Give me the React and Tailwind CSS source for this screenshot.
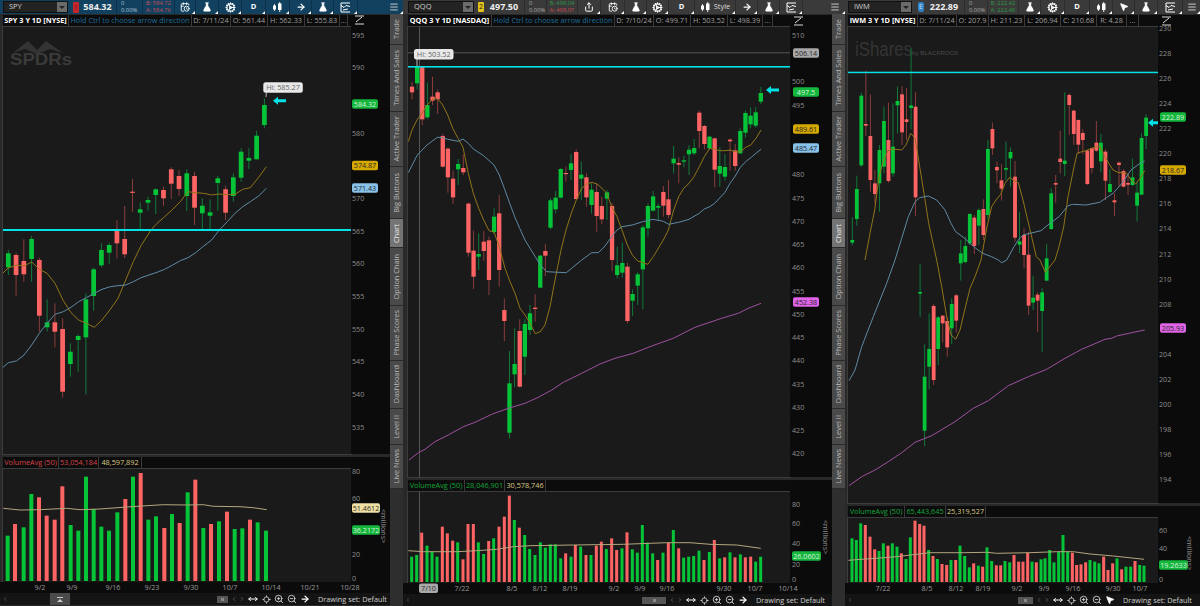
import React from "react";
import { FlaskConical, Cog, ArrowRight, MousePointer2, ZoomIn, ZoomOut, Locate, MoveHorizontal, Menu, Share, CalendarClock, ChevronLeft, ChevronRight } from "lucide-react";

const G = "#05c438", R = "#ff6464", GW = "#11793a", RW = "#8b3c3c";
const YEL = "#917519", BLU = "#5e8aa4", PUR = "#a0509f", AVG = "#b3a67c", CY = "#00e2e6";

const p1 = [
["g",250,275,253.3,267.3],["r",252.7,296,255,275],["r",239.3,281.7,261,274.3],["g",236,281.7,239,259],["r",257.7,331.7,260,315.7],["g",299.3,331.7,322.3,327.3],["r",303.3,347.3,322.3,331.7],["r",318.3,397.7,329,391.7],["g",343.3,376.7,351.7,364],["g",334.3,371.7,336,340],["g",293.3,394.3,299.3,337.3],["g",267.7,310.7,269.3,296],["g",243.3,267.3,250,265.3],["g",242.7,264,245,252.7],["r",220,258.3,230.7,243.3],["r",206,258,239,254.3],["r",179,211.7,191.7,192.7],["g",202.3,230,209.3,212.7],["g",196.7,210.7,200,202.7],["g",188.3,214,189.3,195],["r",186.7,205.7,190,198.3],["r",167.3,199,169.3,183.7],["r",170,196,176,189],["g",169.3,211,173.3,196],["r",171.7,225,176,207.7],["g",198.3,229.3,205.7,213.3],["g",199.3,229.3,212.3,215.7],["g",176,210.7,178.3,183],["r",185.7,220,189.3,212.7],["g",173.3,201.7,177.3,196],["g",148.3,181.7,151.7,177.7],["g",148.3,169,158,160.7],["g",130.7,159.3,135.7,159.3],["g",98.3,128.3,105,125]
];
const p1y = [[3,273],[8,268],[16.7,265],[24,266],[31.7,262],[39.3,269.3],[47,273.3],[55,283.3],[63.3,300.7],[71,312.7],[78.7,320],[86.3,323.3],[94.3,327.3],[102,320],[110.3,309.3],[118,298.3],[125.7,280],[133.3,261.7],[141,245.7],[151,230],[157,223.3],[164.7,216.7],[172.7,209.3],[180.3,201.7],[188,191.7],[195.7,192.7],[203.7,193.3],[211.7,195],[219.3,194],[227.3,194.7],[235,194.3],[242.7,189.3],[250.3,187.7],[258.7,177.3],[266.3,166.7]];
const p1b = [[3,367.3],[8.3,362.7],[16.3,361],[24,355],[31.7,345],[39.3,333.3],[47,323.3],[55,314.3],[63.3,311.7],[71,307.3],[78.7,301.7],[86.3,297.7],[94.3,293.3],[102,289.3],[110.3,286.7],[118,285.7],[125.7,285],[133.3,281.7],[141,277.7],[149,275],[157,272.3],[164.7,269.3],[172.7,265],[180.3,260.7],[188,257.7],[195.7,252.7],[203.7,246],[211.7,240],[219.3,230],[227.3,221.7],[235,213.3],[242.7,206.7],[250.3,201.7],[258.7,196],[266.3,188.3]];
const p1v = [[23,260,"g"],[45,225,"r"],[71,235,"g"],[94,135,"g"],[117,145,"r"],[140,200,"r"],[164,212,"r"],[187,112,"r"],[212,228,"g"],[235,245,"g"],[258,83,"g"],[281,180,"g"],[304,233,"g"],[327,245,"g"],[352,190,"g"],[376,150,"r"],[399,83,"g"],[422,72,"r"],[445,212,"g"],[468,202,"g"],[493,237,"r"],[516,195,"g"],[539,222,"r"],[563,130,"g"],[586,92,"r"],[610,237,"g"],[633,225,"r"],[657,217,"g"],[681,188,"r"],[704,240,"g"],[727,238,"g"],[750,212,"r"],[773,220,"g"],[798,245,"g"]];
const p1a = [[10,178],[60,183],[120,182],[200,178],[240,182],[300,180],[380,174],[440,170],[490,167],[560,168],[610,167],[640,172],[720,173],[760,176],[800,182]];

const o = 540;
const p2 = [
["r",65,118,80,97],["g",18,88,20,70],["r",20,195,20,178],["g",68,177,135,172],["r",50,135,110,122],["r",88,162,97,118],["r",222,322,228,320],["r",262,398,266,352],["r",332,432,356,412],["g",297,375,312,328],["r",283,345,324,337],["r",427,590,431,578],["r",512,687,572,650],["g",520,630,582,590],["r",513,602,545,573],["r",530,705,541,660],["g",445,522,470,516],["r",405,680,460,630],["r",715,843,750,783],["g",873,1135,970,1118],["g",805,982,912,943],["r",778,983,813,980],["g",778,945,792,890],["g",735,825,760,810],["r",703,785,743,747],["g",585,683,587,683],["r",552,648,573,587],["g",415,508,421,503],["g",393,460,413,448],["g",325,415,327,413],["r",320,365,339,342],["g",282,360,310,330],["r",268,420,276,417],["g",305,420,344,356],["r",340,440,352,412],["g",370,460,389,435],["r",370,515,396,468],["r",410,493,438,478],["g",390,480,397,416],["r",430,633,438,600],["g",560,655,616,645],["g",548,653,609,638],["r",608,790,620,783],["g",688,768,702,722],["g",637,735,643,677],["g",495,747,502,628],["g",430,530,438,505],["g",393,455,409,452],["g",430,482,438,443],["r",378,470,396,437],["r",360,475,418,465],["g",258,340,296,310],["r",292,370,309,314],["g",287,322,301,305],["g",255,345,269,283],["g",237,285,264,280],["r",152,265,158,213],["r",195,268,198,252],["g",228,270,230,265],["r",233,382,235,329],["g",262,380,318,341],["g",282,362,321,350],["r",235,332,239,244],["r",252,332,271,318],["g",205,282,213,280],["g",152,233,159,218],["g",142,205,167,193],["g",141,203,157,197],["g",81,132,99,125]
];
const p2y = [[10,245],[21,210],[37,178],[51,160],[66,135],[82,118],[97,115],[113,135],[128,165],[143,205],[159,235],[174,262],[190,340],[205,400],[221,445],[236,480],[252,512],[267,516],[283,560],[300,625],[315,665],[330,700],[345,745],[360,765],[375,790],[391,821],[406,815],[420,795],[435,740],[450,660],[468,570],[483,510],[499,460],[514,420],[530,385],[545,372],[561,367],[576,372],[591,385],[605,400],[620,440],[636,470],[651,510],[667,555],[682,585],[698,603],[728,613],[745,590],[775,540],[790,510],[806,450],[821,410],[836,385],[852,370],[867,350],[883,320],[898,290],[914,265],[929,268],[945,272],[960,272],[975,270],[991,275],[1006,276],[1022,262],[1037,255],[1053,235],[1068,210]];
const p2b = [[10,338],[37,285],[66,255],[97,232],[113,233],[128,238],[159,244],[174,237],[190,250],[205,267],[236,287],[267,315],[283,345],[298,385],[314,430],[329,470],[344,505],[360,540],[375,565],[391,590],[406,615],[425,635],[484,638],[500,625],[530,600],[560,578],[580,578],[600,558],[620,530],[636,510],[651,500],[682,495],[713,485],[744,478],[775,484],[791,493],[821,487],[852,478],[883,460],[898,447],[914,440],[929,430],[960,397],[975,370],[991,348],[1006,322],[1022,305],[1053,280],[1068,268]];
const p2p = [[12,660],[40,638],[60,628],[90,605],[130,585],[175,560],[210,547],[260,523],[310,505],[360,490],[400,472],[440,450],[475,427],[530,400],[585,372],[630,355],[685,340],[740,318],[805,295],[870,262],[950,235],[1000,220],[1030,205],[1068,190]].map(([x,y])=>[x,y+o]);
const p2v = [[65,320,"g"],[80,315,"g"],[95,248,"r"],[111,287,"g"],[126,305,"g"],[141,320,"g"],[157,230,"r"],[172,250,"r"],[188,272,"r"],[203,277,"g"],[219,328,"r"],[234,222,"r"],[250,222,"r"],[265,277,"g"],[281,312,"g"],[296,273,"r"],[311,265,"g"],[327,230,"r"],[343,200,"r"],[358,137,"r"],[373,210,"g"],[388,233,"r"],[404,255,"g"],[419,297,"g"],[435,315,"g"],[451,277,"g"],[466,293,"g"],[481,283,"g"],[496,283,"g"],[512,325,"g"],[527,310,"r"],[543,320,"g"],[556,285,"r"],[572,290,"g"],[588,315,"r"],[603,315,"g"],[619,287,"r"],[634,275,"r"],[649,297,"g"],[665,265,"r"],[680,300,"r"],[696,295,"g"],[711,247,"r"],[727,298,"g"],[742,308,"g"],[757,225,"g"],[772,278,"g"],[788,310,"g"],[803,330,"r"],[819,308,"g"],[835,278,"r"],[850,240,"g"],[866,295,"r"],[881,323,"g"],[896,320,"g"],[911,318,"g"],[927,302,"g"],[942,330,"r"],[958,306,"g"],[973,270,"r"],[989,325,"g"],[1004,322,"r"],[1020,307,"g"],[1035,322,"r"],[1051,313,"g"],[1066,322,"r"],[1082,320,"r"],[1097,335,"g"],[1112,320,"g"]];
const p2a = [[55,302],[100,305],[200,305],[260,302],[320,298],[370,290],[420,287],[550,285],[700,283],[830,278],[900,278],[960,283],[1040,285],[1112,295]];

const p3 = [
["g",472,555,540,548],["g",347,497,387,477],["g",98,320,107,316],["r",32,228,192,197],["r",103,395,228,360],["r",330,430,370,402],["g",255,455,270,370],["g",140,340,183,320],["r",128,368,240,363],["g",130,350,260,340],["g",80,220,123,136],["r",78,255,103,217],["r",85,240,178,186],["g",-36,208,136,144],["r",97,468,140,412],["g",612,770,696,701],["g",853,1158,950,1112],["g",760,988,867,920],["r",732,975,738,960],["g",768,915,772,867],["r",765,848,767,790],["r",770,890,783,862],["g",715,852,732,805],["r",702,818,706,782],["g",540,662,580,610],["g",530,610,558,606],["g",460,555,462,550],["r",465,582,473,558],["g",445,555,450,497],["r",418,540,447,525],["g",240,478,267,465],["r",188,285,207,265],["r",305,370,321,331],["r",313,422,361,386],["g",245,360,324,329],["g",262,380,276,295],["r",303,545,350,533],["g",455,580,544,554],["r",505,625,525,585],["r",515,765,584,737],["g",647,750,713,728],["r",697,815,704,722],["g",685,875,697,753],["g",552,662,595,662],["g",385,510,400,507],["r",345,428,369,374],["r",212,340,296,306],["g",97,348,302,312],["r",100,225,105,135],["r",150,255,152,222],["r",178,282,180,254],["r",208,283,219,240],["r",268,375,272,372],["r",262,340,264,324],["r",183,275,248,272],["g",222,337,248,304],["r",268,420,275,362],["g",327,400,372,396],["r",400,468,421,427],["r",305,380,308,315],["r",328,382,333,380],["r",340,405,369,374],["g",296,378,352,375],["g",368,485,398,437],["g",220,405,234,404],["g",163,267,173,228]
];
const p3y = [[60,600],[75,520],[89,450],[102,350],[116,300],[129,272],[143,267],[170,270],[183,255],[197,220],[210,235],[224,320],[237,400],[251,490],[264,550],[275,600],[290,680],[305,770],[318,825],[332,838],[345,810],[358,755],[375,685],[390,650],[408,600],[426,500],[440,440],[453,420],[467,403],[480,370],[494,352],[507,362],[520,368],[534,420],[548,480],[561,535],[574,590],[585,600],[601,637],[630,600],[642,560],[656,500],[669,410],[683,340],[696,280],[710,275],[723,272],[750,262],[764,258],[777,285],[791,310],[804,330],[818,337],[845,340],[858,360],[872,372],[885,355],[899,332]];
const p3b = [[12,962],[30,930],[50,860],[85,770],[125,670],[150,600],[170,535],[190,470],[210,425],[224,413],[250,408],[275,420],[300,450],[318,490],[332,515],[359,535],[386,560],[413,580],[440,590],[460,600],[470,608],[485,600],[507,560],[520,540],[534,525],[588,512],[615,490],[642,470],[669,437],[683,433],[723,435],[764,427],[804,400],[831,370],[858,330],[885,310],[899,303]];
const p3p = [[12,677],[50,650],[90,630],[130,605],[170,578],[210,547],[260,527],[330,485],[385,445],[430,422],[490,377],[550,350],[605,328],[660,295],[710,268],[780,238],[800,235],[815,228],[860,218],[899,210]].map(([x,y])=>[x,y+600]);
const p3v = [[66,175,"g"],[79,180,"g"],[92,130,"g"],[106,135,"r"],[120,170,"r"],[134,208,"r"],[147,213,"g"],[160,190,"g"],[174,197,"r"],[187,190,"g"],[201,200,"g"],[214,220,"r"],[228,237,"g"],[241,172,"g"],[255,122,"r"],[269,132,"r"],[282,137,"r"],[296,210,"g"],[309,228,"r"],[322,237,"g"],[336,252,"r"],[350,255,"r"],[363,240,"g"],[377,240,"r"],[390,197,"g"],[404,228,"g"],[418,262,"g"],[431,250,"r"],[445,257,"g"],[458,260,"r"],[471,202,"g"],[485,243,"g"],[499,256,"r"],[512,256,"r"],[525,243,"g"],[539,247,"g"],[552,225,"r"],[566,245,"r"],[579,245,"r"],[593,218,"r"],[606,245,"g"],[619,247,"r"],[633,238,"g"],[645,235,"g"],[659,210,"g"],[672,247,"g"],[686,215,"g"],[699,165,"g"],[713,215,"g"],[727,218,"r"],[740,255,"r"],[753,253,"r"],[767,247,"r"],[780,240,"g"],[794,245,"g"],[807,250,"g"],[821,230,"r"],[834,270,"r"],[848,250,"r"],[861,235,"g"],[875,268,"r"],[888,260,"g"],[902,260,"g"],[915,243,"r"],[929,255,"g"],[942,257,"g"]];
const p3a = [[55,241],[120,236],[200,230],[300,218],[400,218],[470,217],[500,220],[600,218],[680,215],[730,215],[780,222],[850,228],[942,238]];

const pts = (a, ox, oy, s = 1 / 3) => a.map(([x, y]) => `${(ox + x * s).toFixed(1)},${(oy + y * s).toFixed(1)}`).join(" ");

function Candles({ rows, x0, dx, oy, s, w }) {
  return rows.map(([c, h, l, t, b], i) => {
    const x = x0 + dx * i;
    const top = oy + t * s, bot = oy + b * s;
    return (
      <g key={i}>
        <rect x={x - 0.5} y={oy + h * s} width={1} height={(l - h) * s} fill={c === "g" ? GW : RW} />
        <rect x={x - w / 2} y={top} width={w} height={Math.max(bot - top, 1.2)} fill={c === "g" ? G : R} />
      </g>
    );
  });
}
function Bars({ rows, ox, oy, base, w }) {
  return rows.map(([x, t, c], i) => {
    const y = oy + t / 3;
    return <rect key={i} x={ox + x / 3 - w / 2} y={y} width={w} height={base - y} fill={c === "g" ? G : R} />;
  });
}
const Line = ({ p, c, w = 1 }) => <polyline points={p} fill="none" stroke={c} strokeWidth={w} strokeLinejoin="round" />;
function Arrow({ x, y }) {
  return <path d={`M${x} ${y}l5 -4v2.500h8v3h-8v2.500z`} fill={CY} />;
}
function HiLabel({ x, y, w, t, tx, ty }) {
  return (
    <g>
      <path d={`M${x + 3} ${y + 10}L${tx} ${ty}`} stroke="#bbb" strokeWidth="1" />
      <rect x={x} y={y} width={w} height={10.5} rx={2.5} fill="#e8e8e8" />
      <text x={x + w / 2} y={y + 8} textAnchor="middle" fontSize="7.300" fill="#666">{t}</text>
    </g>
  );
}
function Badge({ x, y, t, bg, fg = "#2a2a2a", w = 26 }) {
  return (
    <g>
      <rect x={x} y={y - 4.700} width={w} height={9.400} rx={2} fill={bg} />
      <text x={x + w / 2} y={y + 2.700} textAnchor="middle" fontSize="7.200" fill={fg}>{t}</text>
    </g>
  );
}
function Ticks({ x, items }) {
  return items.map(([t, y]) => (
    <text key={t} x={x} y={y + 2.600} fontSize="7.200" fill="#8d8d8d">{t}</text>
  ));
}
const range = (a, b, st) => { const r = []; for (let v = a; v >= b; v -= st) r.push(v); return r; };
function CornerIcon({ x, y }) {
  return <path d={`M${x} ${y - 4}h9M${x} ${y + 4}h9M${x + 1} ${y + 2}l6 -5`} stroke="#ddd" strokeWidth="1" fill="none" />;
}
function Millions({ x, y }) {
  return <text transform={`translate(${x} ${y}) rotate(90)`} fontSize="7.200" fill="#8d8d8d">{"<millions>"}</text>;
}
function DateBar({ className, viewBox, items, badge }) {
  return (
    <svg className={className} viewBox={viewBox}>
      {badge}
      {items.map(([t, x, c]) => (
        <text key={t} x={x} y={591} textAnchor="middle" fontSize="7.200" fill={c || "#9a9a9a"}>{t}</text>
      ))}
    </svg>
  );
}

const Corner = () => <span className="absolute right-0 bottom-0 w-0 h-0 border-l-[3px] border-l-transparent border-b-[3px] border-b-white" />;
const Flask = () => <FlaskConical size={10} color="#fff" fill="#fff" strokeWidth={1.500} />;
const Gear = () => <Cog size={11} color="#fff" strokeWidth={2.600} />;
const Drawn = () => (
  <svg width="11" height="11" viewBox="0 0 11 11" fill="none" stroke="#fff" strokeWidth="1">
    <path d="M1 1h9M1 3.500l3 2 2 -2 4 1M1 1v9h9M3 8l5 -1" />
  </svg>
);
const CandleIcon = () => (
  <svg width="11" height="10" viewBox="0 0 11 10" fill="#fff">
    <rect x="1" y="3.500" width="3" height="4" /><rect x="2.200" y="2" width="0.800" height="7" />
    <rect x="6" y="1.500" width="3.500" height="6.500" /><rect x="7.300" y="0" width="0.900" height="10" />
  </svg>
);
const Cell = ({ w, div, children }) => (
  <div className={`relative h-full flex items-center justify-center shrink-0 border-r gap-[3px] ${w} ${div}`}>
    {children}
    <Corner />
  </div>
);
function Sym({ name, w }) {
  return (
    <div className={`h-[12px] shrink-0 bg-[#232323] border border-[#111] flex items-center pl-[5px] text-[7.500px] text-[#cfcfcf] relative ${w}`}>
      {name}
      <span className="absolute right-0 top-0 bottom-0 w-[10px] bg-[#6b6b6b] flex items-center justify-center">
        <span className="w-0 h-0 border-x-[3px] border-x-transparent border-t-[3px] border-t-[#222]" />
      </span>
    </div>
  );
}
function Quote({ price, pw, cw, bw, bid, ask, bidC, askC, div, sub }) {
  return (
    <>
      <div className={`h-full flex items-center justify-center text-[9px] font-bold text-[#eee] shrink-0 border-r ${pw} ${div}`}>{price}</div>
      <div className={`h-full flex flex-col justify-center pl-[4px] text-[5.800px] leading-[7px] shrink-0 border-r ${cw} ${div} ${sub}`}>
        <span className="h-[7px] overflow-hidden">0</span><span className="h-[7px] overflow-hidden">0.00%</span>
      </div>
      <div className={`h-full flex flex-col justify-center items-center text-[5.800px] leading-[7px] shrink-0 border-r ${bw} ${div}`}>
        <span className={`h-[7px] overflow-hidden ${bidC}`}>B: {bid}</span><span className={`h-[7px] overflow-hidden ${askC}`}>A: {ask}</span>
      </div>
    </>
  );
}
const Ham = ({ cls }) => (
  <div className={`h-full flex items-center justify-center ml-auto relative ${cls}`}>
    <Menu size={10} color="#d8d8d8" strokeWidth={2.200} />
    <Corner />
  </div>
);

function HeadRow({ cells, width }) {
  return (
    <div className={`h-[11px] flex bg-[#0c0c0c] text-[7.300px] leading-[11px] whitespace-nowrap ${width}`}>
      {cells.map(([t, c, w], i) => (
        <div key={i} className={`h-full border-r border-[#3a3a3a] text-center shrink-0 ${c} ${w}`}>{t}</div>
      ))}
    </div>
  );
}

const tabs = [["Trade", "h-[31px]"], ["Times And Sales", "h-[67px]"], ["Active Trader", "h-[55px]"], ["Big Buttons", "h-[52px]"], ["Chart", "h-[29px]"], ["Option Chain", "h-[58px]"], ["Phase Scores", "h-[55px]"], ["Dashboard", "h-[48px]"], ["Level II", "h-[36px]"], ["Live News", "h-[44px]"]];
function TabStrip() {
  return (
    <div className="w-[13px] shrink-0 flex flex-col bg-[#2e2e2e]">
      {tabs.map(([t, h]) => (
        <div key={t} className={`${h} w-[13px] flex items-center justify-center border-b border-[#2a2a2a] ${t === "Chart" ? "bg-[#747474] text-[#e4e4e4]" : "bg-[#4a4a4a] text-[#b9b9b9]"}`}>
          <span className="[writing-mode:vertical-rl] rotate-180 text-[7.400px] leading-[13px] whitespace-nowrap">{t}</span>
        </div>
      ))}
    </div>
  );
}
function ScrollBar({ className, grip, thumb, arrows, last }) {
  return (
    <div className={`h-[12px] bg-[#141414] flex items-center relative text-[#9a9a9a] shrink-0 ${className}`}>
      <ChevronLeft size={6} className="absolute left-[2px]" color="#777" />
      {grip}
      <span className={`h-[7px] bg-[#555] ${thumb} flex items-center justify-center`}><span className="w-[3px] h-[3px] bg-[#888]" /></span>
      <ChevronLeft size={6} color="#888" className={arrows} />
      <ChevronRight size={6} color="#888" className="ml-[2px]" />
      <MoveHorizontal size={10} color="#fff" strokeWidth={2.400} className="ml-[3px]" />
      <Locate size={9} color="#ddd" className="ml-[4px]" />
      <ZoomIn size={10} color="#ddd" className="ml-[3px]" />
      <ZoomOut size={10} color="#ddd" className="ml-[3px]" />
      {last}
      <span className="ml-[8px] text-[7.300px] text-[#cfcfcf] whitespace-nowrap">Drawing set: Default</span>
    </div>
  );
}
const BLUE_DIV = "border-[#0c3149]", GRAY_DIV = "border-[#2d2d2d]";
const HD = "text-[#9d9d9d]";

export default function App() {
  return (
    <div className="w-[1200px] h-[606px] flex bg-[#292929] overflow-hidden font-['Open_Sans',sans-serif]">
      {/* SPY */}
      <div className="w-[403px] shrink-0 flex flex-col">
        <div className="h-[14px] bg-[#12405f] flex items-center pl-[3px] shrink-0">
          <Sym name="SPY" w="w-[65px]" />
          <span className="ml-[5px] w-[6px] h-[11px] rounded-[1px] bg-[#c4262e] text-[7px] leading-[11px] text-center text-[#7d1016] shrink-0">1</span>
          <Quote price="584.32" pw="w-[38px]" cw="w-[26px]" bw="w-[32px]" bid="584.72" ask="584.76" bidC="text-[#c9505a]" askC="text-[#c9505a]" div={BLUE_DIV} sub="text-[#a9c3d4]" />
          <Cell w="w-[21px]" div={BLUE_DIV}><CalendarClock size={10} color="#fff" strokeWidth={2.200} /></Cell>
          <Cell w="w-[23px]" div={BLUE_DIV}><Flask /></Cell>
          <Cell w="w-[23px]" div={BLUE_DIV}><Gear /></Cell>
          <Cell w="w-[24px]" div={BLUE_DIV}><span className="text-[7.500px] font-bold text-white">D</span></Cell>
          <Cell w="w-[24px]" div={BLUE_DIV}><CandleIcon /></Cell>
          <Cell w="w-[22px]" div={BLUE_DIV}><ArrowRight size={10} color="#fff" strokeWidth={3} /></Cell>
          <Cell w="w-[22px]" div={BLUE_DIV}><Flask /></Cell>
          <Cell w="w-[24px]" div={BLUE_DIV}><Drawn /></Cell>
          <Ham cls="w-[18px]" />
        </div>
        <div className="flex-1 flex min-h-0">
          <div className="w-[390px] flex flex-col shrink-0">
            <div className="flex pl-[3px] h-[440px] pt-[1px]">
              <div className="w-[348px] shrink-0 flex flex-col gap-[1px]">
                <HeadRow width="w-[348px]" cells={[["SPY 3 Y 1D [NYSE]", "font-bold text-white", "w-[66px]"], ["Hold Ctrl to choose arrow direction", "text-[#1f6c9c]", "w-[123px]"], ["D: 7/11/24", HD, "w-[39px]"], ["O: 561.44", HD, "w-[37px]"], ["H: 562.33", HD, "w-[37px]"], ["L: 555.83", HD, "w-[35px]"], ["...", HD, "w-[8px]"]]} />
                <svg className="w-[348px] h-[427px] bg-[#1a1a1a] outline outline-1 outline-[#3c3c3c]" viewBox="3 27 348 427">
                  <path d="M13 53L28 41L37 50L46 41L63 53L50 49L37 54L25 49z" fill="#343434" />
                  <text x="10" y="65" fontSize="16" fontWeight="700" fill="#3a3a3a" fontFamily="Liberation Sans, sans-serif" textLength="62" lengthAdjust="spacingAndGlyphs">SPDRs</text>
                  <Candles rows={p1} x0={8.3} dx={7.76} oy={0} s={1} w={4.700} />
                  <Line p={pts(p1y, 0, 0, 1)} c={YEL} />
                  <Line p={pts(p1b, 0, 0, 1)} c={BLU} />
                  <rect x="3" y="229" width="348" height="2" fill={CY} />
                  <HiLabel x={263.3} y={82.3} w={39.5} t="Hi: 585.27" tx={266} ty={97} />
                  <Arrow x={273} y={100.7} />
                </svg>
              </div>
              <svg className="w-[39px] h-[439px] bg-[#0b0b0b] shrink-0" viewBox="351 15 39 439">
                <CornerIcon x={355} y={20} />
                <Ticks x={352} items={range(595, 535, 5).map((v, i) => [v, 35 + i * 32.67]).filter(([v]) => v !== 585 && v !== 575)} />
                <Badge x={352} y={104} t="584.32" bg="#15b63c" fg="#d4f0dc" />
                <Badge x={352} y={165.5} t="574.87" bg="#d6a900" />
                <Badge x={352} y={188} t="571.43" bg="#86c2ea" />
              </svg>
            </div>
            <div className="flex pl-[3px] mt-[3px] h-[125px]">
              <div className="w-[348px] shrink-0 flex flex-col gap-[1px]">
                <HeadRow width="w-[348px]" cells={[["VolumeAvg (50)", "text-[#d8434a]", "w-[56px]"], ["53,054,184", "text-[#d8434a]", "w-[40px]"], ["48,597,892", "text-[#d8c987]", "w-[43px]"]]} />
                <svg className="w-[348px] h-[113px] bg-[#1a1a1a] outline outline-1 outline-[#3c3c3c]" viewBox="3 470 348 113">
                  <Bars rows={p1v} ox={0} oy={450} base={582} w={4} />
                  <Line p={pts(p1a, 0, 450)} c={AVG} />
                </svg>
              </div>
              <svg className="w-[39px] h-[125px] bg-[#0b0b0b] shrink-0" viewBox="351 458 39 125">
                <Ticks x={352} items={[[80, 472], [60, 499.3], [20, 555], [0, 579]]} />
                <Badge x={352} y={509} t="51.4612" bg="#f0dfa3" w={28} />
                <Badge x={352} y={531} t="36.2172" bg="#15b63c" fg="#d4f0dc" w={28} />
                <Millions x={381} y={510} />
              </svg>
            </div>
            <DateBar className="w-[390px] h-[11px] bg-[#0b0b0b] shrink-0" viewBox="0 583 390 11" items={[["9/2", 40], ["9/9", 72], ["9/16", 113], ["9/23", 152], ["9/30", 191], ["10/7", 230], ["10/14", 271], ["10/21", 310], ["10/28", 350]]} />
            <ScrollBar className="w-[390px]" grip={<span className="absolute left-[50px] h-[12px] w-[20px] bg-[#4a4a4a] flex flex-col items-center justify-center gap-[1px]"><span className="w-[6px] h-[1px] bg-[#ccc]" /><span className="w-0 h-0 border-x-[3px] border-x-transparent border-b-[3px] border-b-[#ccc]" /></span>} thumb="ml-[217px] w-[11px]" arrows="ml-[3px]" last={<ArrowRight size={10} color="#fff" strokeWidth={3} className="ml-[3px]" />} />
          </div>
          <TabStrip />
        </div>
      </div>
      {/* QQQ */}
      <div className="w-[442px] shrink-0 flex flex-col">
        <div className="h-[14px] bg-[#3a3a3a] flex items-center pl-[5px] shrink-0">
          <Sym name="QQQ" w="w-[66px]" />
          <span className="ml-[4px] w-[6px] h-[10px] rounded-[1px] bg-[#e3c21a] text-[7px] leading-[10px] text-center text-[#1e1e1e] shrink-0">2</span>
          <Quote price="497.50" pw="w-[41px]" cw="w-[22px]" bw="w-[31px]" bid="498.04" ask="498.07" bidC="text-[#2b9a44]" askC="text-[#cc4b52]" div={GRAY_DIV} sub="text-[#aaa]" />
          <Cell w="w-[23px]" div={GRAY_DIV}><Share size={10} color="#fff" strokeWidth={2.400} /></Cell>
          <Cell w="w-[24px]" div={GRAY_DIV}><CalendarClock size={10} color="#fff" strokeWidth={2.200} /></Cell>
          <Cell w="w-[22px]" div={GRAY_DIV}><Flask /></Cell>
          <Cell w="w-[22px]" div={GRAY_DIV}><Gear /></Cell>
          <Cell w="w-[26px]" div={GRAY_DIV}><span className="text-[7.500px] font-bold text-white">D</span></Cell>
          <Cell w="w-[41px]" div={GRAY_DIV}><CandleIcon /><span className="text-[7.500px] text-[#ddd]">Style</span></Cell>
          <Cell w="w-[22px]" div={GRAY_DIV}><ArrowRight size={10} color="#fff" strokeWidth={3} /></Cell>
          <Cell w="w-[22px]" div={GRAY_DIV}><Flask /></Cell>
          <Cell w="w-[23px]" div={GRAY_DIV}><Drawn /></Cell>
          <Ham cls="w-[20px]" />
        </div>
        <div className="flex-1 flex min-h-0">
          <div className="w-[429px] flex flex-col shrink-0">
            <div className="flex pl-[5px] h-[463px] pt-[1px]">
              <div className="w-[382px] shrink-0 flex flex-col gap-[1px]">
                <HeadRow width="w-[382px]" cells={[["QQQ 3 Y 1D [NASDAQ]", "font-bold text-white", "w-[84px]"], ["Hold Ctrl to choose arrow direction", "text-[#1f6c9c]", "w-[123px]"], ["D: 7/10/24", HD, "w-[39px]"], ["O: 499.71", HD, "w-[37px]"], ["H: 503.52", HD, "w-[37px]"], ["L: 498.39", HD, "w-[35px]"], ["...", HD, "w-[10px]"]]} />
                <svg className="w-[382px] h-[450px] bg-[#1a1a1a] outline outline-1 outline-[#3c3c3c]" viewBox="408 27 382 450">
                  <rect x="408" y="52.300" width="382" height="1" fill="#555" />
                  <rect x="419" y="27" width="1" height="450" fill="#555" />
                  <Candles rows={p2} x0={412} dx={5.13} oy={60} s={1 / 3} w={4.300} />
                  <Line p={pts(p2y, 405, 60)} c={YEL} />
                  <Line p={pts(p2b, 405, 60)} c={BLU} />
                  <Line p={pts(p2p, 405, 60)} c={PUR} />
                  <rect x="408" y="66" width="382" height="1.600" fill={CY} />
                  <HiLabel x={414} y={49} w={39.5} t="Hi: 503.52" tx={417} ty={66} />
                  <Arrow x={766} y={90} />
                </svg>
              </div>
              <svg className="w-[42px] h-[462px] bg-[#0b0b0b] shrink-0" viewBox="790 15 42 462">
                <CornerIcon x={794} y={21} />
                <Ticks x={792} items={range(510, 420, 5).map((v, i) => [v, 35.2 + i * 23.25]).filter(([v]) => v !== 505 && v !== 490 && v !== 485)} />
                <Badge x={793} y={53} t="506.14" bg="#a8a8a8" />
                <Badge x={793} y={92} t="497.5" bg="#15b63c" fg="#d4f0dc" />
                <Badge x={793} y={129} t="489.61" bg="#d6a900" />
                <Badge x={793} y={148} t="485.47" bg="#86c2ea" />
                <Badge x={793} y={302} t="452.38" bg="#e063e8" />
              </svg>
            </div>
            <div className="flex pl-[5px] mt-[3px] h-[103px]">
              <div className="w-[382px] shrink-0 flex flex-col gap-[1px]">
                <HeadRow width="w-[382px]" cells={[["VolumeAvg (50)", "text-[#14a53a]", "w-[57px]"], ["28,046,901", "text-[#14a53a]", "w-[40px]"], ["30,578,746", "text-[#d8c987]", "w-[41px]"]]} />
                <svg className="w-[382px] h-[91px] bg-[#1a1a1a] outline outline-1 outline-[#3c3c3c]" viewBox="408 492 382 91">
                  <rect x="419" y="492" width="1" height="91" fill="#555" />
                  <Bars rows={p2v} ox={390} oy={450} base={582} w={3} />
                  <Line p={pts(p2a, 390, 450)} c={AVG} />
                </svg>
              </div>
              <svg className="w-[42px] h-[103px] bg-[#0b0b0b] shrink-0" viewBox="790 480 42 103">
                <Ticks x={792} items={[[80, 504], [60, 523], [40, 543], [20, 564], [0, 579]]} />
                <Badge x={792} y={556} t="26.0602" bg="#15b63c" fg="#d4f0dc" w={29} />
                <Millions x={823} y={520} />
              </svg>
            </div>
            <DateBar className="w-[429px] h-[11px] bg-[#0b0b0b] shrink-0" viewBox="403 583 429 11" badge={<rect x="419" y="583.500" width="19" height="9.500" rx="2" fill="#aaa" />} items={[["7/10", 428.5, "#2a2a2a"], ["7/22", 462], ["8/5", 512], ["8/12", 540], ["8/19", 570], ["9/2", 614], ["9/9", 640], ["9/16", 667], ["9/30", 724], ["10/7", 755], ["10/14", 788]]} />
            <ScrollBar className="w-[429px]" thumb="ml-[239px] w-[24px]" arrows="ml-[3px]" last={<ArrowRight size={10} color="#fff" strokeWidth={3} className="ml-[3px]" />} />
          </div>
          <TabStrip />
        </div>
      </div>
      {/* IWM */}
      <div className="w-[355px] shrink-0 flex flex-col">
        <div className="h-[14px] bg-[#3a3a3a] flex items-center pl-[3px] shrink-0">
          <Sym name="IWM" w="w-[64px]" />
          <span className="ml-[6px] w-[6px] h-[10px] rounded-[2px] bg-[#2f80c4] text-[7px] leading-[10px] text-center text-[#bfe0f7] shrink-0">E</span>
          <Quote price="222.89" pw="w-[41px]" cw="w-[23px]" bw="w-[31px]" bid="222.42" ask="222.48" bidC="text-[#2b9a44]" askC="text-[#2b9a44]" div={GRAY_DIV} sub="text-[#aaa]" />
          <Cell w="w-[22px]" div={GRAY_DIV}><Flask /></Cell>
          <Cell w="w-[24px]" div={GRAY_DIV}><Gear /></Cell>
          <Cell w="w-[25px]" div={GRAY_DIV}><span className="text-[7.500px] font-bold text-white">D</span></Cell>
          <Cell w="w-[23px]" div={GRAY_DIV}><CandleIcon /></Cell>
          <Cell w="w-[22px]" div={GRAY_DIV}><MousePointer2 size={10} color="#fff" fill="#fff" /></Cell>
          <Cell w="w-[23px]" div={GRAY_DIV}><Flask /></Cell>
          <Cell w="w-[25px]" div={GRAY_DIV}><Drawn /></Cell>
          <Ham cls="w-[17px]" />
        </div>
        <div className="flex flex-col flex-1 min-h-0">
          <div className="flex pl-[3px] h-[489px] pt-[1px]">
            <div className="w-[310px] shrink-0 flex flex-col gap-[1px]">
              <HeadRow width="w-[310px]" cells={[["IWM 3 Y 1D [NYSE]", "font-bold text-white", "w-[70px]"], ["D: 7/11/24", HD, "w-[39px]"], ["O: 207.9", HD, "w-[32px]"], ["H: 211.23", HD, "w-[36px]"], ["L: 206.94", HD, "w-[36px]"], ["C: 210.68", HD, "w-[36px]"], ["R: 4.28", HD, "w-[30px]"], ["...", HD, "w-[12px]"]]} />
              <svg className="w-[310px] h-[476px] bg-[#1a1a1a] outline outline-1 outline-[#3c3c3c]" viewBox="848 27 310 476">
                <text x="855" y="56" fontSize="20" fill="#343434" fontFamily="Liberation Sans, sans-serif" textLength="57" lengthAdjust="spacingAndGlyphs">iShares</text>
                <text x="912" y="55" fontSize="6.200" fill="#4c4c4c" fontFamily="Liberation Sans, sans-serif">by BLACKROCK</text>
                <Candles rows={p3} x0={852.3} dx={4.52} oy={60} s={1 / 3} w={3.800} />
                <Line p={pts(p3y, 845, 60)} c={YEL} />
                <Line p={pts(p3b, 845, 60)} c={BLU} />
                <Line p={pts(p3p, 845, 60)} c={PUR} />
                <rect x="848" y="71.700" width="310" height="1.500" fill={CY} />
                <Arrow x={1148} y={122.700} />
              </svg>
            </div>
            <svg className="w-[42px] h-[488px] bg-[#0b0b0b] shrink-0" viewBox="1158 15 42 488">
              <CornerIcon x={1162} y={21} />
              <Ticks x={1159} items={range(230, 194, 2).map((v, i) => [v, 28 + i * 25.1]).filter(([v]) => v !== 206)} />
              <Badge x={1160} y={117} t="222.89" bg="#15b63c" fg="#d4f0dc" />
              <Badge x={1160} y={170} t="218.67" bg="#d6a900" />
              <Badge x={1160} y={328} t="205.93" bg="#e063e8" />
            </svg>
          </div>
          <div className="flex pl-[3px] mt-[3px] h-[77px]">
            <div className="w-[310px] shrink-0 flex flex-col gap-[1px]">
              <HeadRow width="w-[310px]" cells={[["VolumeAvg (50)", "text-[#14a53a]", "w-[57px]"], ["65,443,645", "text-[#14a53a]", "w-[41px]"], ["25,319,527", "text-[#d8c987]", "w-[40px]"]]} />
              <svg className="w-[310px] h-[65px] bg-[#1a1a1a] outline outline-1 outline-[#3c3c3c]" viewBox="848 518 310 65">
                <Bars rows={p3v} ox={830} oy={480} base={582} w={3} />
                <Line p={pts(p3a, 830, 480)} c={AVG} />
              </svg>
            </div>
            <svg className="w-[42px] h-[77px] bg-[#0b0b0b] shrink-0" viewBox="1158 506 42 77">
              <Ticks x={1159} items={[[60, 530.7], [40, 548], [0, 579]]} />
              <Badge x={1159} y={565} t="19.2633" bg="#15b63c" fg="#d4f0dc" w={29} />
              <Millions x={1187} y={536} />
            </svg>
          </div>
          <DateBar className="w-[355px] h-[11px] bg-[#0b0b0b] shrink-0" viewBox="845 583 355 11" items={[["7/22", 883], ["8/5", 927], ["8/12", 956], ["8/19", 983], ["9/2", 1017], ["9/9", 1044], ["9/16", 1073], ["9/30", 1113], ["10/7", 1140]]} />
          <ScrollBar className="w-[355px]" thumb="ml-[173px] w-[15px]" arrows="ml-[3px]" last={<MousePointer2 size={10} color="#fff" fill="#fff" className="ml-[3px]" />} />
        </div>
      </div>
    </div>
  );
}
